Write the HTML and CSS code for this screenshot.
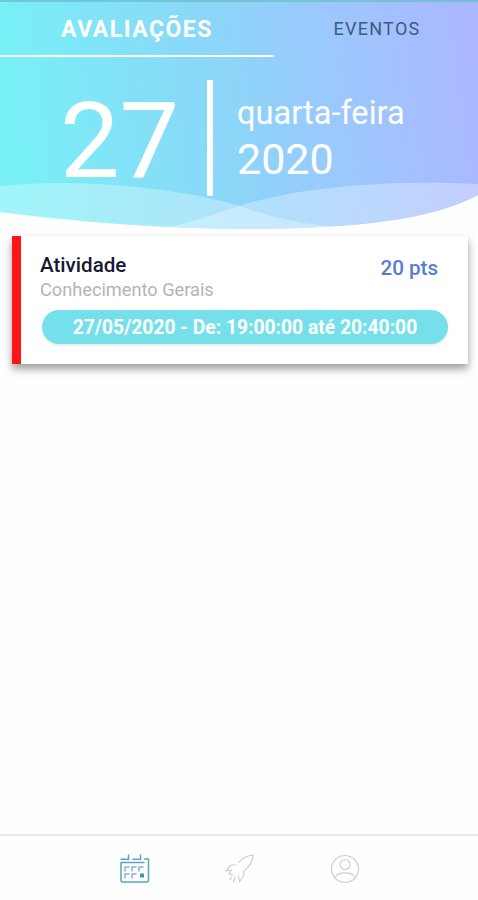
FILE: index.html
```html
<!DOCTYPE html>
<html lang="pt-BR">
<head>
<meta charset="utf-8">
<title>Avaliações</title>
<link rel="stylesheet" href="styles.css">
</head>
<body>
<div class="app">
  <header class="hero">
    <svg class="waves" viewBox="0 0 478 232" aria-hidden="true">
      <defs>
        <linearGradient id="sky" gradientUnits="userSpaceOnUse" x1="15" y1="130" x2="475" y2="68">
          <stop offset="0" stop-color="#78f0f6"/>
          <stop offset=".5" stop-color="#8ed3f9"/>
          <stop offset=".7" stop-color="#9cc8fd"/>
          <stop offset="1" stop-color="#abb7ff"/>
        </linearGradient>
        <clipPath id="edge"><path d="M0 0H478V195C430 221 350 229 240 229C145 228 65 220 0 212Z"/></clipPath>
      </defs>
      <g clip-path="url(#edge)">
        <path fill="url(#sky)" d="M0 0H478V232H0Z"/>
        <path class="wave" d="M0 186C75 178 175 187 240 206C270 217 300 224 335 227V232H0Z"/>
        <path class="wave" d="M160 229C195 222 220 212 245 204C310 185 400 180 478 184V232H160Z"/>
      </g>
      <path class="status-edge" d="M0 0H478V2H0Z"/>
    </svg>
    <nav class="tabs">
      <a class="tab tab-active">AVALIAÇÕES</a>
      <a class="tab">EVENTOS</a>
    </nav>
    <div class="date">
      <span class="day">27</span>
      <span class="divider"></span>
      <div class="date-text">
        <span class="weekday">quarta-feira</span>
        <span class="year">2020</span>
      </div>
    </div>
  </header>
  <main class="content">
    <article class="card">
      <div class="card-head">
        <div>
          <h2 class="title">Atividade</h2>
          <p class="subject">Conhecimento Gerais</p>
        </div>
        <span class="points">20 pts</span>
      </div>
      <div class="time">27/05/2020 - De: 19:00:00 até 20:40:00</div>
    </article>
  </main>
  <footer class="bottom-nav">
    <svg class="icon icon-active" viewBox="0 0 30 30">
      <path d="M1 5.200H8.500V1M13 5.200H20.500V1M24.500 5H28.500V26Q28.500 28 26.500 28H3Q1 28 1 26V8.500H24"/>
      <path class="days" d="M5 17V13H9M12 17V13H16M19 17V13H23M5 24V20H9M12 24V20H16"/>
      <path class="selected" d="M20 19.500h4v4h-4z"/>
    </svg>
    <svg class="icon" viewBox="0 0 30 30">
      <path d="M14 8C18 4 22 1.500 28 1C28 7 25 12 19 17L18.500 22L14.500 28L13.500 22M11 11H6L1 17L6.500 16L4 20L8 21M6.500 23L5 26M10 23L8.500 28"/>
    </svg>
    <svg class="icon" viewBox="0 0 30 30">
      <circle cx="15" cy="15" r="13.500"/><circle cx="15" cy="10.500" r="5"/>
      <path d="M5.500 23C8 17.500 22 17.500 24.500 23"/>
    </svg>
  </footer>
</div>
</body>
</html>
```
FILE: styles.css
```css
* { box-sizing: border-box; }
body { margin: 0; background: #fefefe; font-family: Roboto, sans-serif; }
.app { height: 900px; display: flex; flex-direction: column; overflow: hidden; }
.hero { position: relative; height: 232px; flex: none; }
.waves { position: absolute; inset: 0; width: 100%; height: 100%; }
.wave { fill: #fff; fill-opacity: .31; }
.status-edge { fill: #6bbccc; fill-opacity: .75; }
.tabs { position: relative; display: grid; grid-template-columns: 274px 1fr; height: 57px; }
.tab { display: flex; align-items: center; justify-content: center; color: #3f5b7b; font-size: 18px; letter-spacing: 1.3px; padding-left: 2px; }
.tab-active { padding: 3px 0 0; color: #fff; font-size: 23px; font-weight: 700; letter-spacing: 1.5px; border-bottom: 2px solid #fff; }
.date { position: relative; display: flex; height: 139px; padding: 23px 0 0 60px; color: #fff; }
.day { width: 147px; padding-top: 1px; font-size: 106px; line-height: 120px; }
.divider { width: 6px; height: 116px; background: #fff; }
.date-text { display: flex; flex-direction: column; padding: 11px 0 0 24px; }
.weekday { font-size: 32.6px; line-height: 45px; }
.year { font-size: 43px; line-height: 46px; }
.content { flex: 1; padding: 4px 10px 0 12px; }
.card { height: 128px; padding: 17px 20px 0 19px; background: #fff; border-left: 9px solid #ff1515; box-shadow: 0 5px 8px rgba(0,0,0,.38); }
.card-head { display: flex; justify-content: space-between; height: 57px; }
.title { margin: 0; color: #171733; font-size: 20.6px; line-height: 24px; font-weight: 500; }
.subject { margin: 1px 0 0; color: #b1b4b8; font-size: 18.2px; line-height: 24px; }
.points { padding: 3px 10px 0 0; color: #557dd3; font-size: 20.6px; line-height: 24px; font-weight: 500; }
.time { height: 34px; margin-left: 2px; border-radius: 17px; background: #75e0eb; color: #fff; font-size: 19.3px; line-height: 35px; font-weight: 700; text-align: center; white-space: nowrap; box-shadow: 0 2px 2px rgba(0,0,0,.08); }
.bottom-nav { display: flex; justify-content: center; gap: 75px; height: 66px; padding: 18px 0 0 1px; border-top: 2px solid #e9e9e9; }
.icon { width: 30px; height: 30px; fill: none; stroke: #cfcfcf; stroke-width: 1.2; stroke-linecap: round; stroke-linejoin: round; }
.icon-active { stroke: #5ba6bf; stroke-width: 1.5; }
.days { stroke: #82b7ca; }
.selected { fill: #4096b7; stroke: none; }
```
